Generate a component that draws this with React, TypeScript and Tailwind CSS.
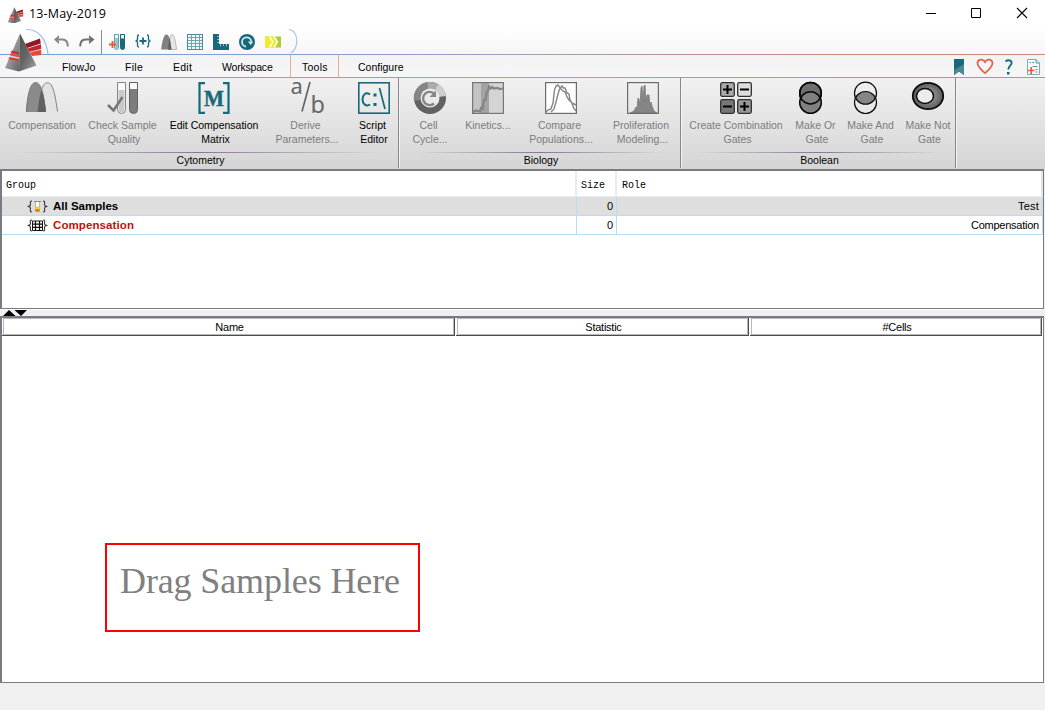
import type { ReactNode } from "react";

const TEAL = "#17697a";

function Cone({ size }: { size: number }) {
  return (
    <svg width={size} height={size * 1.1} viewBox="0 0 40 44" preserveAspectRatio="none" className="shrink-0">
      <defs>
        <linearGradient id="coneL" x1="0" y1="0" x2="1" y2="1">
          <stop offset="0" stopColor="#a8a8a8" />
          <stop offset="0.5" stopColor="#969696" />
          <stop offset="1" stopColor="#5f5f5f" />
        </linearGradient>
        <linearGradient id="coneR" x1="0" y1="0" x2="1" y2="1">
          <stop offset="0" stopColor="#4f4f4f" />
          <stop offset="0.5" stopColor="#666" />
          <stop offset="1" stopColor="#a5a5a5" />
        </linearGradient>
      </defs>
      <path d="M22 16 37 10.500 37.800 15.500 24 20Z" fill="#931823" />
      <path d="M24.500 20.500 38 16.300 38.200 21 26.500 23.800Z" fill="#c0272d" />
      <path d="M27 24.300 38.200 21.800 38.200 27 29 28Z" fill="#e8493c" />
      <path d="M17 5.500 2 40 16 43.500Z" fill="url(#coneL)" />
      <path d="M17 5.500 33.500 37.500 16 43.500Z" fill="url(#coneR)" />
      <path d="M8.800 22.500 16 24 16 26.500 7.800 24.800Z" fill="#c92f30" />
      <path d="M7.600 25.300 16 27.200 16 29.300 6.800 27.300Z" fill="#e8493c" />
      <path d="M6.800 27.600 16 29.600 16 30.800 6.300 28.800Z" fill="#f7d9d2" />
      <path d="M6.200 29.200 16 31.300 16 33.300 5.500 31.200Z" fill="#df3d35" />
    </svg>
  );
}

function Small({ children }: { children: ReactNode }) {
  return (
    <svg width="16" height="16" viewBox="0 0 16 16" fill="none" className="shrink-0">
      {children}
    </svg>
  );
}

function QuickBar() {
  return (
    <div className="flex h-[26px] items-center pl-[53px]">
      <svg width="16" height="16" viewBox="0 0 16 16" fill="none" className="mt-[2px]">
        <path d="M3.500 5.500H9.500C13 5.500 14.800 8 14.800 12.500" stroke="#858585" strokeWidth="2" />
        <path d="M1 5.500 6 1.200V4L4.500 5.500 6 7V10Z" fill="#858585" />
      </svg>
      <svg width="16" height="16" viewBox="0 0 16 16" fill="none" className="mt-[2px] ml-[10px]">
        <path d="M12.500 5.500H6.500C3 5.500 1.200 8 1.200 12.500" stroke="#707070" strokeWidth="2" />
        <path d="M15.500 5.500 10 1.200V4L11.500 5.500 10 7V10Z" fill="#707070" />
      </svg>
      <div className="mt-[2px] ml-[6px] h-[24px] w-px bg-[#8c8c8c]" />
      <div className="mt-[2px] ml-[7px] flex gap-[10px]">
        <Small>
          <path d="M5 .5h4.500v13a2 2 0 0 1-4 0V.5" fill="#eef5f6" stroke="#6ba0aa" />
          <path d="M6.200 4h2.800v9.500a1.400 1.400 0 0 1-2.800 0Z" fill="#9cc0c6" />
          <path d="M11.500 .5v13a2 2 0 0 0 4 0V.5Z" fill={TEAL} stroke={TEAL} />
          <path d="M12 1h3v3.500h-3Z" fill="#e4f1f3" />
          <path d="M0 10.500H7M3.500 7V14" stroke="#e8583c" strokeWidth="1.800" />
        </Small>
        <Small>
          <path d="M4 1C1.800 1 2.700 4 2.500 5.500 2.300 6.500 1.500 7 .5 7 1.500 7 2.300 7.500 2.500 8.500 2.700 10 1.800 13 4 13M12 1C14.200 1 13.300 4 13.500 5.500 13.700 6.500 14.500 7 15.500 7 14.500 7 13.700 7.500 13.500 8.500 13.300 10 14.200 13 12 13" stroke={TEAL} strokeWidth="1.300" />
          <path d="M4.500 7H11.500M8 3.500V10.500" stroke={TEAL} strokeWidth="1.800" />
        </Small>
        <Small>
          <path d="M7.500 15.500C8.500 6 9 .5 11 .5S14.500 6 15.500 15.500Z" fill="#e6e6e6" stroke="#aaa" strokeWidth=".8" />
          <path d="M.2 15.500C1.200 6 3 .5 5.500 .5S9.500 6 10.500 15.500Z" fill="#808080" />
          <path d="M7 15.500C7.500 10 7.800 6 8.400 4 9.400 7 9.800 11 10.500 15.500Z" fill="#626262" />
        </Small>
        <Small>
          <rect x=".5" y=".5" width="15" height="15" fill="#f3f8f8" stroke="#4a8a96" />
          <path d="M4.500 1V15M8.500 1V15M12.500 1V15M1 3.500H15M1 6.500H15M1 9.500H15M1 12.500H15" stroke="#6fa4ad" />
        </Small>
        <Small>
          <path d="M0 0H6V10H16V16H0Z" fill={TEAL} />
          <path d="M4 2.500H6M4 5.500H6M4 8.500H6M7.500 10V12.500M10.500 10V12M13.500 10V12.500" stroke="#9cc0c6" strokeWidth=".9" />
        </Small>
        <Small>
          <circle cx="8" cy="8" r="8" fill={TEAL} />
          <path d="M7 12.600A4.600 4.600 0 1 1 12.200 7.500" stroke="#d7e9ec" strokeWidth="1.800" />
          <path d="M8.800 7.500H14V8L11.800 11Z" fill="#d7e9ec" />
        </Small>
        <Small>
          <path d="M0 2.500H16V13.500H0Z" fill="#b0cc35" />
          <path d="M0 2.500H9L13 8 9 13.500H0Z" fill="#f1eb2b" />
          <path d="M4.500 2.500 8 8 4.500 13.500M9 2.500 12.500 8 9 13.500" stroke="#fff" strokeWidth="1.400" />
        </Small>
      </div>
      <svg width="10" height="26" viewBox="0 0 10 26" fill="none" className="ml-[7px]">
        <path d="M1 1.500C10.500 3 11.500 19 3 25" stroke="#a9c2e0" strokeWidth="1.100" />
      </svg>
    </div>
  );
}

function TabRow() {
  return (
    <div className="flex h-[22px] items-center bg-gradient-to-b from-[#f3f3f3] to-[#f6f6f6] pl-[62px] text-[10.5px] leading-none text-black">
      <span className="w-[63px] pt-[3px]">FlowJo</span>
      <span className="w-[48px] pt-[3px] tracking-[0.3px]">File</span>
      <span className="w-[49px] pt-[3px] tracking-[0.25px]">Edit</span>
      <span className="w-[68px] pt-[3px] tracking-[-0.2px]">Workspace</span>
      <span className="flex h-full w-[49px] items-center border-x border-[#e6b48c] pt-[3px] pl-[11px] tracking-[0.25px]">Tools</span>
      <span className="pt-[3px] pl-[19px]">Configure</span>
      <div className="ml-auto flex items-center pt-[2px] pr-[5px]">
        <svg width="10" height="16" viewBox="0 0 10 16">
          <path d="M0 0H10V16L5 12.500 0 16Z" fill={TEAL} />
          <path d="M10 5V16L5 12.500 0 16V11Z" fill="#4b8794" />
        </svg>
        <svg width="18" height="17" viewBox="0 0 18 17" fill="none" className="-mt-px ml-[12px]">
          <path d="M9 15.200C5 11.500 1.500 8.800 1.500 5.300 1.500 1 7 .2 9 4 11 .2 16.500 1 16.500 5.300 16.500 8.800 13 11.500 9 15.200Z" stroke="#e06049" strokeWidth="1.700" />
        </svg>
        <svg width="8" height="16" viewBox="0 0 8 16" fill="none" className="ml-[11px]">
          <path d="M.5 2.500C2.500 .8 6.600 .6 6.600 4 6.600 6.500 3.300 7 3.300 10.500" stroke={TEAL} strokeWidth="1.900" />
          <path d="M2 13H4.500V15.500H2Z" fill={TEAL} />
        </svg>
        <svg width="13" height="16" viewBox="0 0 13 16" fill="none" className="ml-[14px]">
          <path d="M.5 .5H9L12.500 4V15.500H.5Z" fill="#fafafa" stroke="#7fa9b1" />
          <path d="M9 .5V4H12.500M2.500 3.500H4M5 3.500H7M5.500 7.500H10.500M8.500 10.500H10.500M8.500 13H10.500" stroke="#5d949e" />
          <path d="M1 11.500H7.500M4.200 8V15" stroke="#e8583c" strokeWidth="1.600" />
        </svg>
      </div>
    </div>
  );
}

function Tool({ box, icon, a, b, dark, nudge = "" }: { box: string; icon: ReactNode; a: string; b?: string; dark?: boolean; nudge?: string }) {
  return (
    <div className={`flex shrink-0 flex-col items-center text-[10.5px] leading-[14px] whitespace-nowrap ${dark ? "text-black" : "text-[#7c7c7c]"} ${box}`}>
      <svg width="32" height="32" viewBox="0 0 32 32" fill="none" className={`mb-[4px] overflow-visible ${nudge}`}>
        {icon}
      </svg>
      <span>{a}</span>
      {b && <span className="pl-[3px]">{b}</span>}
    </div>
  );
}

function Group({ width, title, children }: { width: string; title: string; children: ReactNode }) {
  return (
    <div className={`flex h-[90px] shrink-0 flex-col border-r border-[#85858a] shadow-[1px_0_0_#f4f4f4] ${width}`}>
      <div className="flex h-[74px] pt-[4px]">{children}</div>
      <div className="mx-[15px] h-px bg-gradient-to-r from-transparent via-[#8a7595] to-transparent" />
      <div className="pl-[3px] text-center text-[10.5px] leading-[14px] text-black">{title}</div>
    </div>
  );
}

const peaks = (
  <>
    <path d="M10.500 29.500C14 12 16 .8 21.500 .8S29 12 31.500 29.500" fill="#e2e2e2" stroke="#808080" />
    <path d="M0 30C1 15 4 .5 9.500 .5S18 12 20 30Z" fill="#8a8a8a" />
    <path d="M.5 30C1 15 4 .5 9.500 .5S18 12 19.500 30" stroke="#777" />
    <path d="M11.500 30C12.500 20 14 12 15.500 8 18 15 19 22 20 30Z" fill="#606060" />
  </>
);
const tubes = (
  <>
    <path d="M10.500 .5H18.500V27.500a4 4 0 0 1-8 0Z" fill="#fafafa" stroke="#858585" />
    <path d="M11.500 8H17.500V27.500a3 3 0 0 1-6 0Z" fill="#c9c9c9" />
    <path d="M22.500 .5H30.500V27.500a4 4 0 0 1-8 0Z" fill="#7c7c7c" stroke="#626262" />
    <path d="M23 1H30V7H23Z" fill="#fafafa" />
    <path d="M1 23 6.500 28.500 15.500 15" stroke="#777" strokeWidth="2.600" />
  </>
);
const matrix = (
  <>
    <path d="M7 1.200H1.500V30.800H7M25 1.200H30.500V30.800H25" stroke={TEAL} strokeWidth="2.200" />
    <text x="16" y="23.500" textAnchor="middle" fontFamily="Liberation Serif" fontWeight="700" fontSize="24" textLength="20" lengthAdjust="spacingAndGlyphs" fill={TEAL} stroke={TEAL} strokeWidth=".5">M</text>
  </>
);
const ratio = (
  <g fill="#666">
    <text x="-.5" y="12" fontFamily="Noto Sans, sans-serif" fontSize="22">a</text>
    <path d="M19 0 11 29.500" stroke="#666" strokeWidth="1.700" />
    <text x="19.500" y="31" fontFamily="Noto Sans, sans-serif" fontSize="23.500">b</text>
  </g>
);
const script = (
  <>
    <rect x=".8" y=".8" width="30.400" height="30.400" stroke={TEAL} strokeWidth="1.600" />
    <path d="M12 12.500C7.500 9.500 4.500 13 4.500 17.500S8 25 12.200 22.500" stroke={TEAL} strokeWidth="2" />
    <path d="M15.500 11.500h3v3h-3ZM15.500 21h3v3h-3Z" fill={TEAL} />
    <path d="M21.500 6 27 27" stroke={TEAL} strokeWidth="1.700" />
  </>
);
const cycle = (
  <>
    <circle cx="16" cy="16" r="16" fill="#616161" />
    <path d="M16 16 0 19A16 16 0 0 1 13 .3Z" fill="#858585" />
    <path d="M16 16 13 .3A16 16 0 0 1 24 2Z" fill="#aaa" />
    <path d="M16 16 24 2A16 16 0 0 1 32 14Z" fill="#cecece" />
    <circle cx="16" cy="16" r="9.500" fill="#eaeaea" />
    <path d="M20 21.500A6.600 6.600 0 1 1 20.500 12" stroke="#858585" strokeWidth="2.400" />
    <path d="M15.500 15H22V8.500Z" fill="#858585" />
  </>
);
const kinetics = (
  <>
    <rect width="32" height="32" fill="#d4d4d4" />
    <rect width="9" height="32" fill="#c3c3c3" />
    <rect x="9" width="8" height="32" fill="#a3a3a3" />
    <path d="M1 30 4 28.500 8 29.500 9 26 10.500 27 12 18 13.500 18 14.500 11 16 9 17 4.500 18.500 6.500 20 5 22 6.500 25 6 28 7 31 6.500" stroke="#858585" strokeWidth="2.200" />
    <rect x=".6" y=".6" width="30.800" height="30.800" stroke="#777" strokeWidth="1.200" />
  </>
);
const compare = (
  <>
    <rect x=".6" y=".6" width="30.800" height="30.800" fill="#fff" stroke="#6c6c6c" strokeWidth="1.200" />
    <path d="M1 30 3 28 6 27 8 21 9.500 8 11 4 13 3 14.500 5 16 7 18 9 20 10 22 15 24 18 27 21 29 22 31 23M6 30 9 27 11 20 13 12 14.500 7 17 4 18.500 6 20 6 22 11 24 12 25 18 27 21 28.500 26 31 29" stroke="#858585" strokeWidth="1.400" />
  </>
);
const proliferation = (
  <>
    <path d="M3 31 7 29 9 25 10 27 11 16 12 17 13 24 14 6 15 4 16 20 17 4 18 3 19 20 20 13 22 13 23 24 24 20 25 24 27 29 30 31Z" fill="#858585" stroke="#7a7a7a" strokeWidth=".8" />
    <rect x=".6" y=".6" width="30.800" height="30.800" stroke="#6c6c6c" strokeWidth="1.200" />
  </>
);
const combo = (
  <g stroke="#303030" strokeWidth="1.300">
    <rect x=".7" y=".7" width="13.600" height="13.600" rx="1.500" fill="#aaa" />
    <rect x="17.700" y=".7" width="13.600" height="13.600" rx="1.500" fill="#ddd" />
    <rect x=".7" y="17.700" width="13.600" height="13.600" rx="1.500" fill="#777" />
    <rect x="17.700" y="17.700" width="13.600" height="13.600" rx="1.500" fill="#999" />
    <path d="M3 7.500H12M7.500 3V12M20 7.500H29M3 24.500H12M20 24.500H29M24.500 20V29" stroke="#000" strokeWidth="2" />
  </g>
);
const orGate = (
  <g stroke="#0a0a0a" strokeWidth="1.500">
    <circle cx="12.500" cy="11.200" r="10.800" fill="#6e6e6e" />
    <circle cx="12.500" cy="20.500" r="10.800" fill="#808080" />
    <circle cx="12.500" cy="11.200" r="10.800" />
  </g>
);
const andGate = (
  <>
    <path d="M2.800 15.700A10.800 10.800 0 0 1 22.200 15.700 10.800 10.800 0 0 1 2.800 15.700Z" fill="#858585" />
    <circle cx="12.500" cy="11.200" r="11" stroke="#0a0a0a" strokeWidth="1.200" />
    <circle cx="12.500" cy="20.500" r="11" stroke="#0a0a0a" strokeWidth="1.200" />
  </>
);
const notGate = (
  <>
    <defs>
      <radialGradient id="ng">
        <stop offset=".4" stopColor="#8a8a8a" />
        <stop offset="1" stopColor="#5c5c5c" />
      </radialGradient>
    </defs>
    <ellipse cx="16" cy="14" rx="15.200" ry="13.200" fill="url(#ng)" stroke="#0a0a0a" strokeWidth="1.800" />
    <ellipse cx="13" cy="14" rx="8.500" ry="7.500" fill="#ececec" stroke="#0a0a0a" strokeWidth="1.500" />
  </>
);

function Ribbon() {
  return (
    <div className="flex h-[91px] bg-gradient-to-b from-[#f1f1f1] to-[#d5d5d5]">
      <Group width="w-[399px]" title="Cytometry">
        <Tool box="w-[84px]" icon={peaks} a="Compensation" />
        <Tool box="w-[77px]" icon={tubes} a="Check Sample" b="Quality" />
        <Tool box="w-[106px]" icon={matrix} a="Edit Compensation" b="Matrix" dark />
        <Tool box="w-[77px]" icon={ratio} a="Derive" b="Parameters..." nudge="ml-[3px]" />
        <Tool box="ml-[6px] w-[45px]" icon={script} a="Script" b="Editor" dark nudge="ml-[3px]" />
      </Group>
      <Group width="w-[282px]" title="Biology">
        <Tool box="w-[59px]" icon={cycle} a="Cell" b="Cycle..." nudge="ml-[3px]" />
        <Tool box="w-[60px]" icon={kinetics} a="Kinetics..." />
        <Tool box="w-[83px]" icon={compare} a="Compare" b="Populations..." nudge="ml-[3px]" />
        <Tool box="w-[80px]" icon={proliferation} a="Proliferation" b="Modeling..." nudge="ml-[3px]" />
      </Group>
      <Group width="w-[275px]" title="Boolean">
        <Tool box="w-[110px]" icon={combo} a="Create Combination" b="Gates" />
        <Tool box="w-[49px]" icon={orGate} a="Make Or" b="Gate" nudge="mr-[4px]" />
        <Tool box="w-[61px]" icon={andGate} a="Make And" b="Gate" nudge="mr-[4px]" />
        <Tool box="w-[54px]" icon={notGate} a="Make Not" b="Gate" />
      </Group>
    </div>
  );
}

function Braces({ children }: { children: ReactNode }) {
  return (
    <svg width="21" height="13" viewBox="0 0 21 13" fill="none" className="mr-[5px]">
      <path d="M5 1C2.500 1 3.500 3 3.500 4.500S2.500 6.500 .5 6.500C2.500 6.500 3.500 7 3.500 8.500S2.500 12 5 12M16 1C18.500 1 17.500 3 17.500 4.500S18.500 6.500 20.500 6.500C18.500 6.500 17.500 7 17.500 8.500S18.500 12 16 12" stroke="#3a3a3a" strokeWidth="1.100" />
      {children}
    </svg>
  );
}

function GroupsTable() {
  return (
    <div className="flex h-[140px] w-[1044px] flex-col border-t-2 border-r border-b border-l-2 border-[#7b7a84] bg-white">
      <div className="flex h-[26px] border-b border-[#ececec] font-['Liberation_Mono','Noto_Sans_CJK_SC',monospace] text-[10px] leading-[29px] text-black">
        <div className="w-[575px] border-r-2 border-[#ebebeb] pl-[4px]">Group</div>
        <div className="w-[40px] border-r-2 border-[#ebebeb] pl-[4px]">Size</div>
        <div className="flex-1 border-r-2 border-[#e4e4e4] pl-[5px]">Role</div>
      </div>
      {[
        { name: "All Samples", role: "Test", row: "bg-[#dedede]", ink: "text-black", roleInk: "tracking-[0.2px]" },
        { name: "Compensation", role: "Compensation", row: "bg-white", ink: "text-[#bf1408] tracking-[0.1px]", roleInk: "tracking-[-0.24px]" },
      ].map((g, i) => (
        <div key={g.name} className={`flex h-[19px] border-b border-[#b9dfee] text-[11px] leading-[18px] ${g.row}`}>
          <div className={`flex w-[575px] items-center border-r border-[#b9dfee] pl-[25px] text-[11.5px] font-bold ${g.ink}`}>
            <Braces>
              {i === 0 ? (
                <>
                  <path d="M8.500 2V11H12.500V2" stroke="#b5b5b5" fill="#fff" />
                  <path d="M7 1.500H14" stroke="#8a8a8a" />
                  <path d="M8.500 6.500H12.500V11.500H8.500Z" fill="#f6cf1c" />
                  <path d="M8.500 9.500H12.500V11.500H8.500Z" fill="#c96b10" />
                </>
              ) : (
                <>
                  <path d="M5.500 2H15.500V11.500H5.500Z" fill="#fff" stroke="#111" />
                  <path d="M8.500 2V12M12.500 2V12M5 5.200H16M5 8.400H16" stroke="#111" strokeWidth="1.200" />
                </>
              )}
            </Braces>
            {g.name}
          </div>
          <div className="w-[40px] border-r border-[#b9dfee] pr-[3px] text-right">0</div>
          <div className={`flex-1 border-r border-[#b9dfee] pr-[3px] text-right ${g.roleInk}`}>{g.role}</div>
        </div>
      ))}
    </div>
  );
}

function HeadCell({ width, text }: { width: string; text: string }) {
  return (
    <div className={`h-[18px] border-r border-b border-[#4b4b4b] ${width}`}>
      <div className="ml-px h-[17px] border border-[#b8b8b8] bg-white pl-[2px] text-center text-[11px] leading-[16px] tracking-[-0.25px] text-black">{text}</div>
    </div>
  );
}

export default function App() {
  return (
    <div className="relative flex h-[710px] w-[1045px] flex-col overflow-hidden bg-[#f0f0f0] font-['Liberation_Sans','Noto_Sans_CJK_SC',sans-serif]">
      <header className="bg-gradient-to-b from-white from-50% to-[#f6f6f6]">
        <div className="flex h-[28px] items-center pl-[7px]">
          <Cone size={17} />
          <span className="ml-[5px] font-['Open_Sans','Noto_Sans_CJK_SC',sans-serif] text-[12.5px] leading-none tracking-[0.15px] text-black">13-May-2019</span>
          <svg width="102" height="12" viewBox="0 0 102 12" fill="none" stroke="#000" className="mr-[17px] mb-[2px] ml-auto">
            <path d="M0 6.500H10M45.500 1.500H54.500V10.500H45.500Z" />
            <path d="M91 1 101 11M101 1 91 11" strokeWidth="1.100" />
          </svg>
        </div>
        <QuickBar />
      </header>
      <div className="h-px shrink-0 bg-gradient-to-r from-[#6f9fd8] via-[#93a0c8] via-40% to-[#cc8b80] to-80%" />
      <TabRow />
      <div className="h-px shrink-0 bg-gradient-to-r from-[#6f9fd8] via-[#93a0c8] via-40% to-[#cc8b80] to-80%" />
      <div className="absolute top-[28px] left-[3px] flex">
        <Cone size={40} />
        <svg width="24" height="27" viewBox="0 0 24 27" fill="none" className="-ml-[18px]">
          <path d="M1 1.500C13 1 21 10 23 26" stroke="#9cbfe8" strokeWidth="1.200" />
        </svg>
      </div>
      <Ribbon />
      <GroupsTable />
      <div className="flex h-[7px] items-end border-t border-white pl-[3px]">
        <svg width="24" height="7" viewBox="0 0 24 7" className="block overflow-visible">
          <path d="M0 7 6 1 12.500 7ZM11.500 1H24L18 7Z" fill="#000" />
        </svg>
      </div>
      <div className="flex h-[367px] w-[1044px] flex-col border-t-2 border-r border-b border-l-2 border-[#7b7a84] bg-white">
        <div className="flex h-[18px] gap-px">
          <HeadCell width="w-[453px]" text="Name" />
          <HeadCell width="w-[293px]" text="Statistic" />
          <HeadCell width="w-[292px]" text="#Cells" />
        </div>
        <div className="flex-1 pt-[207px] pl-[103px]">
          <div className="h-[89px] w-[315px] border-2 border-[#ff0000] pt-[13px] pl-[13px] font-['Liberation_Serif','Noto_Sans_CJK_SC',serif] text-[36px] leading-[46px] tracking-[-0.12px] whitespace-nowrap text-[#808080]">
            Drag Samples Here
          </div>
        </div>
      </div>
    </div>
  );
}
